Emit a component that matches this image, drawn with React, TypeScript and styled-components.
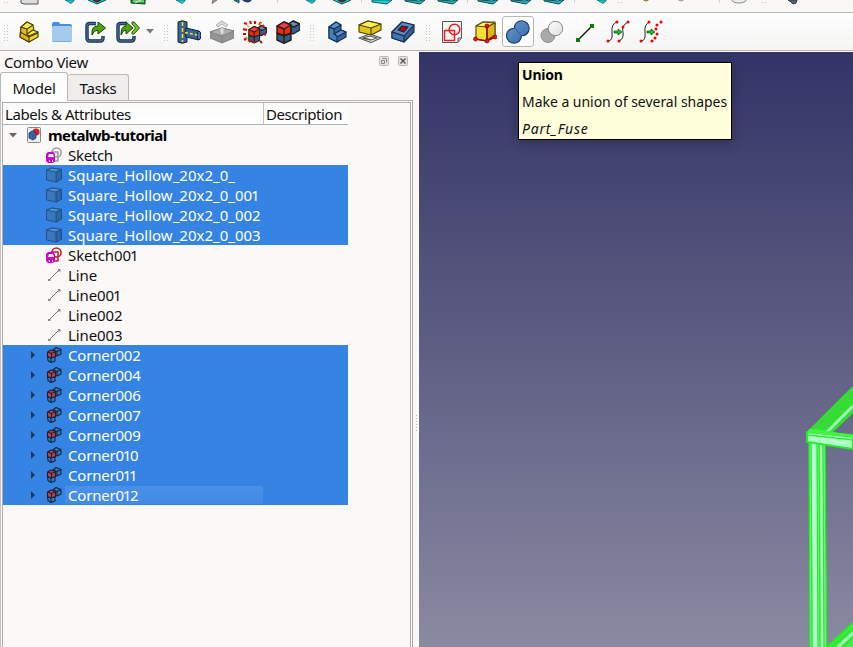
import React from "react";
import styled, { createGlobalStyle, css } from "styled-components";

const GlobalStyle = createGlobalStyle`
  * { box-sizing: border-box; }
  body { margin: 0; overflow: hidden; background: #faf9f8; }
`;

const Window = styled.div`
  width: 853px;
  height: 647px;
  display: flex;
  flex-direction: column;
  overflow: hidden;
  background: #faf9f8;
  color: #111;
  font: 15px/20px "Noto Sans", sans-serif;
  white-space: nowrap;
`;

const ClippedToolbar = styled.div`
  display: flex;
  flex: none;
  height: 13px;
  border-bottom: 1px solid #b9b7b5;
  background: #f9f8f7;
`;

const Toolbar = styled.div`
  display: flex;
  flex: none;
  height: 38px;
  border-bottom: 1px solid #b9b7b5;
  background: linear-gradient(#fefefe, #f6f5f4);
`;

const Space = styled.div<{ $w: number }>`
  flex: none;
  width: ${(p) => p.$w}px;
`;

const Handle = styled.div<{ $w: number; $short?: boolean }>`
  flex: none;
  width: ${(p) => p.$w}px;
  display: flex;
  justify-content: center;
  align-items: center;
  &::before {
    content: "";
    width: 6px;
    height: ${(p) => (p.$short ? 3 : 18)}px;
    align-self: ${(p) => (p.$short ? "flex-start" : "center")};
    background-image: linear-gradient(#faf9f8 2px, transparent 2px), linear-gradient(90deg, #c9c7c5 1px, transparent 1px);
    background-size: 3px 3px;
  }
`;

const Separator = styled.div<{ $w: number }>`
  flex: none;
  width: ${(p) => p.$w}px;
  display: flex;
  justify-content: center;
  &::before {
    content: "";
    width: 1px;
    height: 3px;
    background: #d5d3d1;
  }
`;

const ToolButton = styled.div<{ $active?: boolean }>`
  flex: none;
  width: 33px;
  height: 100%;
  display: flex;
  align-items: center;
  justify-content: center;
  ${(p) =>
    p.$active &&
    css`
      width: 32px;
      margin-right: 1px;
      height: 31px;
      align-self: center;
      border: 1px solid #b8b6b4;
      border-radius: 3px;
      background: #fff;
    `}
`;

const ClippedCell = styled.div`
  flex: none;
  width: 33px;
  height: 12px;
  overflow: hidden;
  svg { display: block; }
`;

const MenuArrow = styled.div`
  width: 13px;
  padding-right: 2px;
  display: flex;
  align-items: center;
  justify-content: center;
`;

const Main = styled.div`
  flex: 1;
  display: flex;
  min-height: 0;
`;

const Dock = styled.div`
  width: 413px;
  flex: none;
  display: flex;
  flex-direction: column;
  padding-top: 1px;
`;

const DockTitle = styled.div`
  height: 20px;
  flex: none;
  display: flex;
  align-items: flex-start;
  padding: 0 5px 0 4px;
  letter-spacing: -0.38px;
  span { flex: 1; }
  svg { margin: 4px 0 0 9px; }
`;

const Tabs = styled.div`
  height: 29px;
  flex: none;
  display: flex;
  align-items: flex-end;
  letter-spacing: -0.2px;
`;

const Tab = styled.div<{ $active?: boolean }>`
  height: ${(p) => (p.$active ? 29 : 27)}px;
  width: ${(p) => (p.$active ? 68 : 61)}px;
  display: flex;
  justify-content: center;
  align-items: center;
  padding-top: ${(p) => (p.$active ? 1 : 0)}px;
  border: 1px solid #bbb9b7;
  border-left-width: ${(p) => (p.$active ? 1 : 0)}px;
  border-bottom: ${(p) => (p.$active ? "0" : "1px solid #b6b4b2")};
  border-radius: 3px 3px 0 0;
  background: ${(p) => (p.$active ? "#fefefe" : "#efeeed")};
`;

const TabLine = styled.div`
  flex: 1;
  border-bottom: 1px solid #b6b4b2;
`;

const TabPage = styled.div`
  flex: 1;
  min-height: 0;
  border-right: 1px solid #b0aeac;
  border-left: 1px solid #c4c2c0;
  padding: 1px 1px 0 1px;
`;

const Tree = styled.div`
  height: 100%;
  border: solid #b0aeac;
  border-width: 1px 1px 0 1px;
`;

const Header = styled.div`
  width: 345px;
  height: 22px;
  display: flex;
  line-height: 23px;
  letter-spacing: -0.43px;
  background: linear-gradient(#fafafa, #fff);
  border-bottom: 1px solid #b4b2b0;
`;

const HeaderCell = styled.div<{ $w: number }>`
  width: ${(p) => p.$w}px;
  padding-left: 2px;
  & + & { border-left: 1px solid #c4c2c0; }
`;

const Row = styled.div<{ $selected?: boolean; $root?: boolean }>`
  width: 345px;
  height: 20px;
  display: flex;
  align-items: center;
  padding-left: ${(p) => (p.$root ? 2 : 22)}px;
  color: ${(p) => (p.$selected ? "#fff" : "#111")};
  background: ${(p) => (p.$selected ? "#3584e4" : "transparent")};
`;

const Expander = styled.div`
  width: 15px;
  height: 16px;
  display: flex;
  align-items: center;
  justify-content: center;
`;

const RowIcon = styled.div`
  width: 16px;
  height: 16px;
  margin-left: 6px;
  svg { display: block; }
`;

const RowLabel = styled.div<{ $bold?: boolean; $focus?: boolean; $tracking?: number }>`
  margin-left: 3px;
  width: 198px;
  height: 18px;
  padding-left: 3px;
  line-height: 18px;
  border-radius: 2px;
  letter-spacing: ${(p) => p.$tracking ?? 0}px;
  font-weight: ${(p) => (p.$bold ? 700 : 400)};
  color: ${(p) => (p.$bold ? "#000" : "inherit")};
  background: ${(p) => (p.$focus ? "linear-gradient(#4a90e7, #418ae5)" : "transparent")};
`;

const NarrowOne = styled.span`
  margin-left: -1px;
  letter-spacing: -1.4px;
`;

const Splitter = styled.div`
  width: 6px;
  display: flex;
  padding: 364px 0 0 3px;
  &::before {
    content: "";
    width: 1px;
    height: 16px;
    background: repeating-linear-gradient(#bbb9b7 0 1px, transparent 1px 3px);
  }
`;

const Viewport = styled.div`
  flex: 1;
  margin-top: 1px;
  position: relative;
  background: linear-gradient(#333366, #8a8aa2);
`;

const Scene = styled.svg`
  display: block;
`;

const Tooltip = styled.div`
  position: absolute;
  left: 99px;
  top: 10px;
  width: 214px;
  height: 78px;
  padding: 0 3px;
  border: 1px solid #000;
  background: #ffffdc;
  color: #111;
  font-size: 14px;
  line-height: 27px;
  box-shadow: 0 3px 10px rgba(0, 0, 0, 0.25);
`;

const TipTitle = styled.div`
  height: 25px;
  line-height: 23px;
  font-weight: 700;
  letter-spacing: -0.2px;
  color: #000;
`;
const TipText = styled.div`
  height: 27px;
  letter-spacing: -0.03px;
`;
const TipCommand = styled.div`
  font-style: italic;
  letter-spacing: 0.9px;
  letter-spacing: 0.8px;
`;

type IconProps = { size?: number; children: React.ReactNode };
const Icon = ({ size = 24, children }: IconProps) => (
  <svg width={size} height={size} viewBox={`0 0 ${size} ${size}`} strokeLinejoin="round">
    {children}
  </svg>
);

const PartIcon = () => (
  <Icon>
    <g stroke="#4a3d00" strokeWidth="1.1">
      <path d="M4 7 10 2 16 5 17 11 21 12 21 17 12 22 3 17Z" fill="#f2d526" />
      <path d="M4 7 10 9 10 14 12 15 12 22 3 17Z" fill="#dfb91a" />
      <path d="M4 7 10 2 16 5 10 9ZM10 14 16 10 21 12 12 16Z" fill="#ffe949" />
      <path d="M3 12 12 17 21 13" fill="none" />
    </g>
  </Icon>
);
const FolderIcon = () => (
  <Icon>
    <path d="M2 4Q2 2 4 2H8Q10 2 10 4H20Q22 4 22 6V12H2Z" fill="#438de6" />
    <rect x="2" y="6" width="20" height="16" rx="1.5" fill="#a4caee" />
    <path d="M3 21.5H21" stroke="#78aee5" />
  </Icon>
);
const LinkArrow = () => (
  <path d="M8 15Q7 6 14 6V2L21.5 8 14 14V10Q10 10 8 15Z" fill="#4ea60c" stroke="#17420a" />
);
const LinkBox = () => (
  <>
    <path d="M12 3.5H6Q3 3.5 3 6V18Q3 21 6 21H16Q19 21 19 18V16" fill="none" stroke="#152b46" strokeWidth="3.4" />
    <path d="M12 3.5H6Q3 3.5 3 6V18Q3 21 6 21H16Q19 21 19 18V16" fill="none" stroke="#416b9d" strokeWidth="1.4" />
  </>
);
const LinkIcon = () => (
  <Icon><g transform="translate(1 0)"><LinkBox /><LinkArrow /></g></Icon>
);
const LinkGroupIcon = () => (
  <Icon>
    <g transform="translate(-1 0)"><LinkBox /></g>
    <path d="M5 15Q5 6 10 6V2L17 8 10 14V10Q7 10 5 15Z" fill="#4ea60c" stroke="#17420a" />
    <path d="M16 2H18L23.5 8 18 14H16V12L19.5 8 16 4Z" fill="#76c22e" stroke="#285a0c" />
  </Icon>
);
const JoinIcon = () => (
  <Icon>
    <path d="M1 2Q5-.5 10 2V22Q5 24.5 1 22Z" fill="#376399" stroke="#152436" />
    <path d="M9 8 22 11Q25 15 22 20L9 17Q7 13 9 8Z" fill="#376399" stroke="#152436" />
    <ellipse cx="22" cy="15.5" rx="1.8" ry="4.4" fill="#4b7bb4" stroke="#152436" />
    <path d="M5.5 2V22" stroke="#ffed00" strokeWidth="1.5" strokeDasharray="4 2" />
    <path d="M8 12.5 20 15" stroke="#ffed00" strokeWidth="1.5" strokeDasharray="3 2" />
  </Icon>
);
const SplitIcon = () => (
  <Icon>
    <g stroke="#808080" strokeWidth=".9">
      <path d="M0 12 12 8 24 11V18L12 23 0 18Z" fill="#959595" />
      <path d="M0 12 12 8 24 11 12 16Z" fill="#b1b1b1" />
      <path d="M12 16V23" />
      <path d="M6 5 12 1 18 5 16 7 12 4 8 7ZM10 8H14V13L12 15 10 12Z" fill="#dedede" stroke="#aaa" />
    </g>
  </Icon>
);
const Blocks = () => (
  <g stroke="#29200f" strokeWidth="1.4">
    <path d="M11 5 17 1 24 4 24 10 17 14 11 10Z" fill="#335f94" />
    <path d="M11 5 17 1 24 4 18 7Z" fill="#5e8ec4" />
    <path d="M1 13 8 16 15 13V20L8 23.3 1 20Z" fill="#315a8f" />
    <path d="M1 6 8 2 15 5V13L8 15.5 1 13Z" fill="#e52e0e" />
    <path d="M1 6 8 2 15 5 8 9Z" fill="#fb3854" />
    <path d="M8 9V23M15 7V13" />
  </g>
);
const ExplodeIcon = () => (
  <Icon>
    <g transform="translate(5 5) scale(.77)"><Blocks /></g>
    <path d="M1 3 4 4M7 1 8 4M12 1V4M18 2 16 5M21 5 19 7M0 9 4 10M0 14H3M21 14 23 15M1 20 4 18M6 22 8 20M11 23V21M17 21 19 23" stroke="#d20d05" strokeWidth="2.2" />
    <path d="M4 5 6 7M17 5 18 3M3 19 5 18" stroke="#e4bd00" strokeWidth="1.3" />
  </Icon>
);
const CompoundIcon = () => <Icon><Blocks /></Icon>;
const ExtrudeIcon = () => (
  <Icon>
    <g stroke="#112d50" strokeWidth="1.1">
      <path d="M4 7 11 2 16 5V10L21 12V17L12 22 4 18Z" fill="#35659f" />
      <path d="M4 7 11 2 16 5 9 9ZM9 14 16 10 21 12 12 17Z" fill="#5c91ce" />
      <path d="M4 7 9 9V14L12 16V22L4 18Z" fill="#477fbd" />
    </g>
  </Icon>
);
const OffsetIcon = () => (
  <Icon>
    <path d="M1 18 12 14 23 18 13 22.5ZM5 18 12 16 19 18 13 20Z" fill="#fafafa" stroke="#555855" strokeWidth="1.3" />
    <g stroke="#493e00" strokeWidth="1.1">
      <path d="M1 5 10 1 23 4V10L13 15 1 12Z" fill="#e1c216" />
      <path d="M1 5 10 1 23 4 13 8Z" fill="#ffed4c" />
      <path d="M13 8V15" />
    </g>
  </Icon>
);
const ThicknessIcon = () => (
  <Icon>
    <g stroke="#132a48" strokeWidth="1.1">
      <path d="M1 12 11 2 23 5V12L13 22 1 18Z" fill="#315f99" />
      <path d="M1 12 11 2 23 5 13 16Z" fill="#5b8bc2" />
      <path d="M1 12 13 16V22L1 18Z" fill="#3f76b6" />
      <path d="M7 10 11 6 17 7 13 12Z" fill="#b90007" />
    </g>
  </Icon>
);
const SketchIcon = () => (
  <Icon>
    <path d="M2.5 1.5H21.5V18L18 22.5H2.5Z" fill="#f4f4f2" stroke="#555753" />
    <path d="M18 22V18H21" fill="#c8c8c5" stroke="#555" />
    <g fill="none" stroke="#ef1a20" strokeWidth="1.5">
      <rect x="4.5" y="10.5" width="10" height="10" /><circle cx="14.5" cy="9.5" r="5.3" />
    </g>
  </Icon>
);
const ShapeIcon = () => (
  <Icon>
    <g stroke="#5a4b03" strokeWidth="1.1">
      <path d="M3 6 10 2H22V15L14 21 3 19Z" fill="#f7df35" />
      <path d="M3 6 10 2 22 3 14 7Z" fill="#fff170" /><path d="M14 7 22 3V15L14 20Z" fill="#d9b915" />
    </g>
    <path d="M14 6V21M2 19 14 21 22 17" stroke="#a90000" strokeWidth="1.6" fill="none" />
    <g fill="#e41414" stroke="#8b0000" strokeWidth=".7"><circle cx="14" cy="6" r="2" /><circle cx="2.5" cy="19" r="2" /><circle cx="14" cy="21" r="2" /><circle cx="22" cy="17" r="2" /></g>
  </Icon>
);
const UnionIcon = () => (
  <Icon>
    <defs><linearGradient id="blue" x1="0" y1="0" x2="1" y2="1"><stop stopColor="#6599d5" /><stop offset="1" stopColor="#3767a7" /></linearGradient></defs>
    <path d="M8.2 8.2A7.5 7.5 0 1 1 15.5 15.8A7.5 7.5 0 1 1 8.2 8.2Z" fill="url(#blue)" stroke="#153760" strokeWidth="1.1" />
    <path d="M9 8Q12 13 15 15" stroke="#335d92" fill="none" />
  </Icon>
);
const CutIcon = () => (
  <Icon>
    <defs><linearGradient id="silver" x1="0" y1="0" x2="1" y2="1"><stop stopColor="#fff" /><stop offset="1" stopColor="#ddd" /></linearGradient></defs>
    <circle cx="8" cy="15.5" r="7" fill="#aaa" stroke="#8e8e8e" /><circle cx="15.5" cy="8.5" r="7.2" fill="url(#silver)" stroke="#858585" />
  </Icon>
);
const LineIcon = () => (
  <Icon><path d="M5 20 18 7" stroke="#161616" strokeWidth="1.4" /><path d="M3 18H7V22H3ZM17 4H21V8H17Z" fill="#078000" /></Icon>
);
const SplineIcon = ({ dotted = false }: { dotted?: boolean }) => (
  <Icon>
    <g transform="translate(1 0)">
      <path d="M1 21Q6 21 5 12Q4 4 10 2" fill="none" stroke="#222" />
      {!dotted && <path d="M12 21Q17 19 16 12Q14 6 21 2" fill="none" stroke="#222" />}
      <path d="M7 11H11V9L15 12 11 15V13H7Z" fill="#12c80e" stroke="#134714" strokeWidth=".7" />
      <g fill="#f70000">
        {(dotted ? [[1, 21], [9, 2], [21, 2], [17, 5], [16, 9], [17, 14], [15, 18], [12, 21]] : [[1, 21], [10, 2], [12, 21], [21, 2], [16, 7]]).map(([x, y]) => <circle key={`${x}-${y}`} cx={x} cy={y} r="1.5" />)}
      </g>
    </g>
  </Icon>
);

type Fragment = "paper" | "tip" | "cube" | "green" | "gray" | "dark" | "solid" | "wire" | "yellow" | "dot" | "disc" | "pen";
const fragmentArt: Record<Fragment, React.ReactNode> = {
  paper: <path d="M8 0V3L11 4H25V0" fill="#ddd" stroke="#555" />,
  tip: <path d="M18 0 24 3.5 27 1V0Z" fill="#19c9ce" stroke="#077277" strokeWidth=".8" />,
  cube: <><path d="M8 0 17 4 26 0" fill="#22bfc4" stroke="#0e5559" /><path d="M13 0 17 2 21 0" fill="#8b1720" stroke="#222" /></>,
  green: <><path d="M18 0V3L32 4V0Z" fill="#13ae2c" stroke="#164523" /><path d="M20 1H31M22 3 28 0" stroke="#dff5e0" /><path d="M32 0 37 4 39 2 36 0Z" fill="#ccc" stroke="#777" /></>,
  gray: <path d="M21 3.5 26 0H22Z" fill="#aaa" stroke="#777" />,
  dark: <><path d="M10 0 15 3V0Z" fill="#13a8af" stroke="#145257" /><path d="M18 0Q24 5 28 0Z" fill="#263d68" /></>,
  solid: <path d="M7 0V2L22 4 27 0Z" fill="#18d1d7" stroke="#176267" />,
  wire: <><path d="M7 0V1L22 4 27 0Z" fill="#18bdc4" stroke="#134b50" /><path d="M11 0 21 1 24 0" fill="#fff" stroke="#134b50" /></>,
  yellow: <circle cx="16" cy="-2" r="3" fill="#f1c944" stroke="#8d7430" />,
  dot: <circle cx="16" cy="-2" r="3" fill="#ccc" stroke="#999" />,
  disc: <ellipse cx="16" cy="0" rx="7" ry="3" fill="#eee" stroke="#888" />,
  pen: <path d="M11 0 14 2 16 4 19 3 20 0Z" fill="#596174" stroke="#33384a" />,
};
const topItems: Array<Fragment | { handle?: number; sep?: number; gap?: number }> = [
  { handle: 13 }, "paper", { gap: 1 }, "tip", "cube", "green", { gap: 12 }, "tip", "gray", "dark",
  { gap: 9 }, { sep: 22 }, { gap: -6 }, "tip", { gap: 4 }, "cube", { sep: 7 }, "solid", "wire", "wire", { sep: 7 },
  "wire", "wire", "wire", { sep: 9 }, { gap: 0 }, "tip", { handle: 17 }, { gap: 1 }, "yellow", { gap: 2 }, "dot",
  { gap: 17 }, { sep: 8 }, "disc", { handle: 18 }, { gap: 3 }, "pen",
];

const BoxIcon = () => (
  <Icon size={16}><g stroke="#1e4f87" strokeWidth=".9"><path d="M.5 3 6 1 15.5 2.5V12L10 15 .5 13Z" fill="#3977ba" /><path d="M.5 3 6 1 15.5 2.5 10 5Z" fill="#5292d4" /><path d="M10 5 15.5 2.5V12L10 15Z" fill="#2b65a4" /></g></Icon>
);
const SmallSketch = ({ muted = false }: { muted?: boolean }) => (
  <Icon size={16}>
    <g fill="none" stroke={muted ? "#999" : "#cc1a25"} strokeWidth="1.5"><path d="M5.5 5H12V14H5Z" /><circle cx="10.5" cy="5.5" r="4.6" /></g>
    <path d="M2 5H7L9 7V14L7 16H2L0 14V7Z" fill="#d200d6" /><path d="M3 7H7L8 10H2ZM3 13H4V15H3ZM6 13H7V15H6Z" fill="#fff" />
  </Icon>
);
const SmallLine = () => (
  <Icon size={16}><path d="M3.5 12.5 12.5 3.5" stroke="#777" /><path d="M2 12H4.5V14H2ZM12 2H14.5V4.5H12Z" fill="#888" /></Icon>
);
const CornerIcon = () => (
  <Icon size={16}><g stroke="#11243c" strokeWidth="1.1">
    <path d="M7 3 10 .5 15 2.5V7L11 9 7 7Z" fill="#397cc5" /><path d="M7 3 11 4.5 15 2.5M11 5V9" fill="none" />
    <path d="M1.5 9.5 5 11 9 9.5V14L5 15.5 2 13.5Z" fill="#397cc5" /><path d="M5 11V15" />
    <path d="M1.5 5 5 3 9.5 4.5V9.5L5 11 1.5 9.5Z" fill="#c83e42" /><path d="M2 5 5.5 6.5 9 5M5.5 6.5V11" fill="none" />
  </g></Icon>
);
const DocumentIcon = () => (
  <Icon size={16}><rect x="1.5" y=".5" width="13" height="15" rx="1" fill="#eee" stroke="#888" /><circle cx="10" cy="5" r="3.6" fill="#df1d25" /><path d="M3 6 6 4 10 6V11L7 13 3 11Z" fill="#376da9" stroke="#193758" strokeWidth=".8" /><path d="M3 6 7 8 10 6M7 8V13" fill="none" stroke="#28527f" strokeWidth=".8" /></Icon>
);

type Kind = "sketch" | "box" | "sketchRed" | "line" | "corner";
const rows: Array<[string, Kind]> = [
  ["Sketch", "sketch"],
  ...["", "001", "002", "003"].map((n): [string, Kind] => [`Square_Hollow_20x2_0_${n}`, "box"]),
  ["Sketch001", "sketchRed"],
  ...["", "001", "002", "003"].map((n): [string, Kind] => [`Line${n}`, "line"]),
  ...["002", "004", "006", "007", "009", "010", "011", "012"].map((n): [string, Kind] => [`Corner${n}`, "corner"]),
];
const rowArt: Record<Kind, React.ReactNode> = {
  sketch: <SmallSketch muted />, box: <BoxIcon />, sketchRed: <SmallSketch />, line: <SmallLine />, corner: <CornerIcon />,
};
const tracking: Record<Kind, number> = { sketch: -0.3, box: 0, sketchRed: -0.1, line: -0.1, corner: -0.2 };

const NumberedName = ({ text }: { text: string }) => (
  <>{text.split(/(1)/).map((part, i) => (part === "1" ? <NarrowOne key={i}>1</NarrowOne> : part))}</>
);

const DockButton = ({ close = false }: { close?: boolean }) => (
  <Icon size={10}><rect x=".5" y=".5" width="9" height="9" rx="1" fill="#e5e3e1" stroke="#bbb8b5" />
    {close ? <path d="M2.5 2.5 7.5 7.5M7.5 2.5 2.5 7.5" stroke="#555" strokeWidth="1.4" /> : <path d="M3.5 2.5H7.5V6.5M2.5 4.5H5.5V7.5H2.5Z" fill="none" stroke="#888" />}
  </Icon>
);

const FrameScene = () => (
  <Scene width="434" height="595" viewBox="0 0 434 595">
    <path d="M389 379 434 334V361L410 383Z" fill="#3ed53e" />
    <g stroke="#22ee22" strokeWidth="1.4"><path d="M390 379 434 335M396 380 434 342M402 381 434 349M410 383 434 360" /><path d="M407 381 434 354" stroke="#9dffb3" strokeWidth="3" /></g>
    <path d="M390 390H406L408 595H391Z" fill="#70ff85" />
    <path d="M395 390 397 595" stroke="#baffd3" strokeWidth="5" />
    <path d="M402.5 390 403.5 595" stroke="#d0ffdc" strokeWidth="2" />
    <g stroke="#25ed29" strokeWidth="1.3"><path d="M390 390 391 595M392 390 393 595M398 390 399 595M400 390 401 595M404 390 405 595M406 390 407.5 595" /></g>
    <path d="M388 380 434 383V397L388 390Z" fill="#b0ffc9" stroke="#20ee20" strokeWidth="2" />
    <path d="M389 383 434 388" stroke="#32e936" strokeWidth="1.5" />
    <path d="M390 377H396L434 383V386L388 381Z" fill="#40f33f" />
    <path d="M407 595 434 570V595Z" fill="#4ce64d" /><path d="M408 595 434 571M413 595 434 576M423 595 434 585" stroke="#22ed25" strokeWidth="2" /><path d="M419 595 434 581" stroke="#a8ffbf" strokeWidth="3" />
  </Scene>
);

export default function App() {
  return (
    <Window>
      <GlobalStyle />
      <ClippedToolbar>
        {topItems.map((item, i) => {
          if (typeof item === "string")
            return <ClippedCell key={i}><svg width="33" height="12" overflow="visible">{fragmentArt[item]}</svg></ClippedCell>;
          if (item.handle) return <Handle key={i} $w={item.handle} $short />;
          if (item.sep) return <Separator key={i} $w={item.sep} />;
          return <Space key={i} $w={Math.max(0, item.gap ?? 0)} />;
        })}
      </ClippedToolbar>
      <Toolbar>
        <Space $w={2} /><Handle $w={10} />
        <ToolButton><PartIcon /></ToolButton>
        <ToolButton><FolderIcon /></ToolButton>
        <ToolButton><LinkIcon /></ToolButton>
        <ToolButton><LinkGroupIcon /></ToolButton>
        <MenuArrow><svg width="8" height="5"><path d="M0 0H8L4 4.5Z" fill="#777" /></svg></MenuArrow>
        <Space $w={4} /><Handle $w={11} />
        <ToolButton><JoinIcon /></ToolButton>
        <ToolButton><SplitIcon /></ToolButton>
        <ToolButton><ExplodeIcon /></ToolButton>
        <ToolButton><CompoundIcon /></ToolButton>
        <Space $w={2} /><Handle $w={14} />
        <ToolButton><ExtrudeIcon /></ToolButton>
        <ToolButton><OffsetIcon /></ToolButton>
        <ToolButton><ThicknessIcon /></ToolButton>
        <Space $w={3} /><Handle $w={13} />
        <ToolButton><SketchIcon /></ToolButton>
        <ToolButton><ShapeIcon /></ToolButton>
        <Space $w={1} />
        <ToolButton $active><UnionIcon /></ToolButton>
        <ToolButton><CutIcon /></ToolButton>
        <ToolButton><LineIcon /></ToolButton>
        <ToolButton><SplineIcon /></ToolButton>
        <ToolButton><SplineIcon dotted /></ToolButton>
      </Toolbar>
      <Main>
        <Dock>
          <DockTitle><span>Combo View</span><DockButton /><DockButton close /></DockTitle>
          <Tabs><Tab $active>Model</Tab><Tab>Tasks</Tab><TabLine /></Tabs>
          <TabPage>
            <Tree>
              <Header><HeaderCell $w={260}>Labels &amp; Attributes</HeaderCell><HeaderCell $w={85}>Description</HeaderCell></Header>
              <Row $root>
                <Expander><svg width="8" height="5"><path d="M0 0H8L4 4.5Z" fill="#666" /></svg></Expander>
                <RowIcon><DocumentIcon /></RowIcon>
                <RowLabel $bold $tracking={-0.55}>metalwb-tutorial</RowLabel>
              </Row>
              {rows.map(([label, kind], i) => (
                <Row key={label} $selected={kind === "box" || kind === "corner"}>
                  <Expander>{kind === "corner" && <svg width="4" height="8"><path d="M0 0V8L4 4Z" fill="#173963" /></svg>}</Expander>
                  <RowIcon>{rowArt[kind]}</RowIcon>
                  <RowLabel $focus={i === rows.length - 1} $tracking={tracking[kind]}><NumberedName text={label} /></RowLabel>
                </Row>
              ))}
            </Tree>
          </TabPage>
        </Dock>
        <Splitter />
        <Viewport>
          <FrameScene />
          <Tooltip><TipTitle>Union</TipTitle><TipText>Make a union of several shapes</TipText><TipCommand>Part_Fuse</TipCommand></Tooltip>
        </Viewport>
      </Main>
    </Window>
  );
}
